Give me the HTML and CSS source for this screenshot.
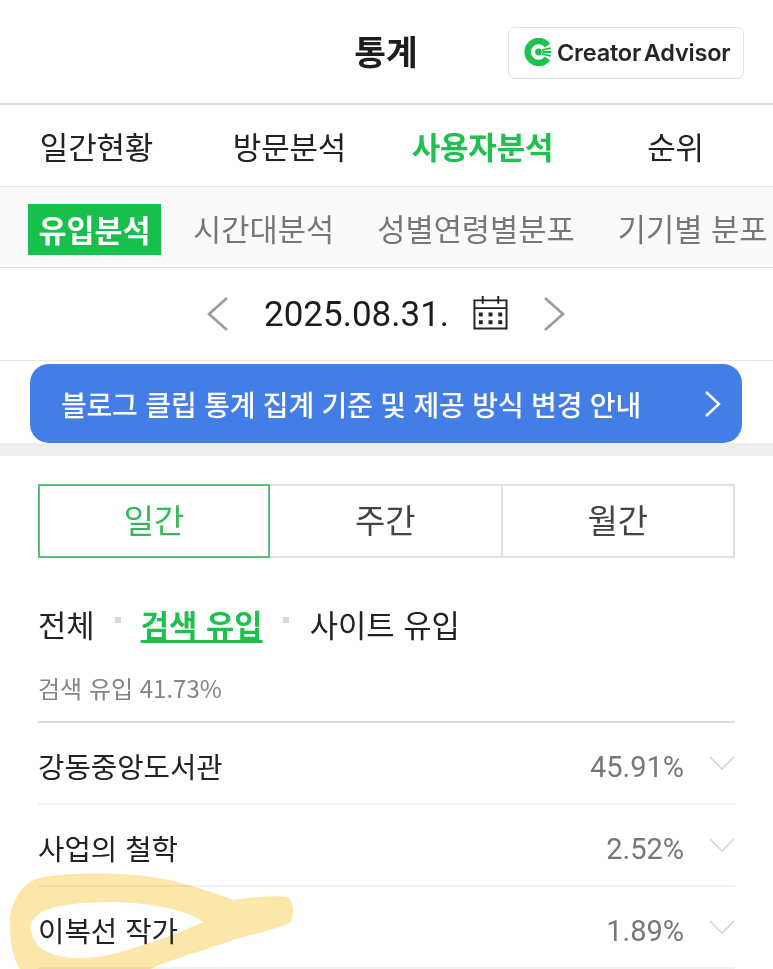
FILE: index.html
```html
<!DOCTYPE html>
<html lang="ko">
<head>
<meta charset="utf-8">
<title>통계</title>
<link rel="stylesheet" href="styles.css">
</head>
<body>
<div class="app">
  <header class="top">
    <h1 class="title">통계</h1>
    <div class="advisor">
      <svg class="advisor-logo" viewBox="0 0 28 28" width="28" height="28">
        <path d="M23.500 7.500A11 11 0 1 0 23.500 20.500" fill="none" stroke="#1fc04f" stroke-width="6.400"/>
        <circle cx="14.500" cy="14" r="3.400" fill="#1fc04f"/>
        <path d="M18 12.200 26.800 10.200M18.400 14H27.400M18 15.800 26.800 17.800" stroke="#1fc04f" stroke-width="1.800" fill="none"/>
      </svg>
      <span class="advisor-text">Creator Advisor</span>
    </div>
  </header>
  <nav class="nav">
    <span class="nav-item">일간현황</span>
    <span class="nav-item">방문분석</span>
    <span class="nav-item nav-active">사용자분석</span>
    <span class="nav-item">순위</span>
  </nav>
  <nav class="subnav">
    <span class="chip">유입분석</span>
    <span class="sub-item">시간대분석</span>
    <span class="sub-item">성별연령별분포</span>
    <span class="sub-item">기기별 분포</span>
  </nav>
  <div class="date-row">
    <svg class="arrow" viewBox="0 0 24 36" width="24" height="36"><path d="M21 2 3 18 21 34" fill="none" stroke="#9b9b9b" stroke-width="2.6"/></svg>
    <span class="date">2025.08.31.</span>
    <svg class="cal" viewBox="0 0 36 36" width="35" height="35">
      <path d="M1.500 5.500H34.500V34.500H1.500ZM1.500 13.500H34.500M10 1V9M26 1V9" fill="none" stroke="#222" stroke-width="2"/>
      <g fill="#222">
        <rect x="6" y="18" width="4" height="4"/><rect x="16" y="18" width="4" height="4"/><rect x="26" y="18" width="4" height="4"/>
        <rect x="6" y="26" width="4" height="4"/><rect x="16" y="26" width="4" height="4"/><rect x="26" y="26" width="4" height="4"/>
      </g>
    </svg>
    <svg class="arrow" viewBox="0 0 24 36" width="24" height="36"><path d="M3 2 21 18 3 34" fill="none" stroke="#9b9b9b" stroke-width="2.6"/></svg>
  </div>
  <div class="banner-wrap">
    <div class="banner">
      <span class="banner-text">블로그 클립 통계 집계 기준 및 제공 방식 변경 안내</span>
      <svg viewBox="0 0 18 28" width="18" height="28"><path d="M2 2 15 14 2 26" fill="none" stroke="#fff" stroke-width="2.400"/></svg>
    </div>
  </div>
  <main class="content">
    <div class="tabs">
      <span class="tab tab-active">일간</span>
      <span class="tab">주간</span>
      <span class="tab">월간</span>
    </div>
    <div class="filters">
      <span class="filter">전체</span>
      <i class="dot"></i>
      <span class="filter filter-active">검색 유입</span>
      <i class="dot"></i>
      <span class="filter filter-last">사이트 유입</span>
    </div>
    <p class="summary">검색 유입 41.73%</p>
    <ul class="list">
      <li class="row"><span class="name">강동중앙도서관</span><span class="pct">45.91%</span><svg class="chev" viewBox="0 0 26 14" width="26" height="14"><path d="M1 1 13 13 25 1" fill="none" stroke="#d4d4d4" stroke-width="1.600"/></svg></li>
      <li class="row"><span class="name">사업의 철학</span><span class="pct">2.52%</span><svg class="chev" viewBox="0 0 26 14" width="26" height="14"><path d="M1 1 13 13 25 1" fill="none" stroke="#d4d4d4" stroke-width="1.600"/></svg></li>
      <li class="row"><span class="name">이복선 작가</span><span class="pct">1.89%</span><svg class="chev" viewBox="0 0 26 14" width="26" height="14"><path d="M1 1 13 13 25 1" fill="none" stroke="#d4d4d4" stroke-width="1.600"/></svg></li>
    </ul>
  </main>
  <svg class="scribble" viewBox="0 0 773 969" width="773" height="969">
    <path fill-rule="evenodd" fill="#fce7aa" d="M33 880C50 874 90 872 133 875 165 877 200 887 233 900 255 897 275 895 287 897 294 900 295 915 290 923 270 931 250 935 233 940 205 950 175 958 150 969H20C12 958 9 935 10 917 12 900 22 886 33 880ZM30 927C32 938 38 947 43 950 55 956 65 958 77 958 95 958 105 956 117 953 135 948 150 943 167 937 180 932 192 927 203 922 195 916 182 911 167 908 150 904 135 903 117 902 100 902 85 902 67 905 55 907 47 909 40 913 35 917 31 922 30 927Z"/>
  </svg>
</div>
</body>
</html>
```
FILE: styles.css
```css
* { box-sizing: border-box; }
html, body { margin: 0; padding: 0; background: #fff; }
body { font-family: "Noto Sans CJK KR", Roboto, sans-serif; color: #222; overflow: hidden; }
.app { position: relative; width: 773px; height: 969px; overflow: hidden; }

.top { height: 105px; border-bottom: 2px solid #dcdcdc; display: flex; align-items: center; justify-content: center; position: relative; padding-bottom: 2px; }
.title { margin: 0 1px 0 0; font-size: 34.500px; font-weight: 700; line-height: 1; color: #1e1e1e; }
.advisor { position: absolute; left: 508px; top: 27px; width: 236px; height: 52px; border: 1px solid #e0e0e0; border-radius: 7px; display: flex; align-items: center; padding: 0 0 2px 15px; gap: 5px; background: #fff; }
.advisor-text { font-family: Inter, sans-serif; font-size: 23.500px; font-weight: 600; letter-spacing: -0.2px; word-spacing: -3px; color: #26262a; white-space: nowrap; }

.nav { height: 81px; display: grid; grid-template-columns: repeat(4, 193px); justify-items: center; align-items: center; }
.nav-item { font-size: 31px; color: #222; letter-spacing: -0.2px; }
.nav-active { color: #1ec04e; font-weight: 700; }

.subnav { height: 82px; background: #fafafa; border-top: 1px solid #e6e6e6; border-bottom: 1px solid #dedede; display: flex; align-items: center; padding-left: 28px; white-space: nowrap; }
.chip { flex: none; background: #17c04c; color: #fff; font-size: 30.500px; font-weight: 700; height: 51px; width: 133px; margin-top: 4px; display: flex; align-items: center; justify-content: center; margin-right: 32px; }
.sub-item { flex: none; font-size: 30.700px; color: #777; margin-right: 43px; }

.date-row { height: 93px; border-bottom: 1px solid #e8e8e8; display: flex; align-items: center; padding-left: 206px; }
.date { font-family: Roboto, sans-serif; font-size: 35px; color: #1c1c1c; margin-left: 34px; width: 209px; }
.cal { margin-right: 34px; margin-top: -3px; }

.banner-wrap { height: 95px; padding: 3px 31px 13px 30px; background: linear-gradient(#fff 82px, #eeeeee 82px); }
.banner { height: 79px; background: #437de6; border-radius: 19px; display: flex; align-items: center; justify-content: space-between; padding: 0 20px 0 31px; }
.banner-text { color: #fff; font-size: 28px; font-weight: 500; letter-spacing: -0.2px; }

.content { padding: 28px 38px 0; }
.tabs { display: flex; height: 74px; }
.tab { flex: 1; display: flex; align-items: center; justify-content: center; padding-bottom: 5px; font-size: 33px; color: #444; border: 2px solid #e0e0e0; border-left: 0; }
.tab-active { flex: 0 0 232px; color: #35b859; border: 2px solid #5cbc78; }

.filters { display: flex; align-items: center; height: 60px; margin-top: 35px; font-size: 30.800px; }
.filter { color: #222; }
.filter-active { color: #1ec04e; font-weight: 700; text-decoration: underline; text-underline-offset: 3px; }
.filter-last { margin-left: 1px; }
.dot { width: 6px; height: 6px; background: #d8d8d8; margin: -6px 20px 0; }

.summary { margin: 17px 0 0; height: 53px; padding-top: 2px; font-size: 24px; line-height: 32px; color: #858585; border-bottom: 2px solid #dedede; }

.list { list-style: none; margin: 0; padding: 0; }
.row { height: 82px; padding-top: 4px; display: flex; align-items: center; border-bottom: 2px solid #f2f2f2; }
.name { flex: 1; font-size: 28.700px; color: #222; }
.pct { font-family: Roboto, sans-serif; font-size: 29px; color: #777; margin-right: 25px; margin-top: 4px; }
.chev { margin-top: -4px; }

.scribble { position: absolute; left: 0; top: 0; pointer-events: none; mix-blend-mode: multiply; }
```
